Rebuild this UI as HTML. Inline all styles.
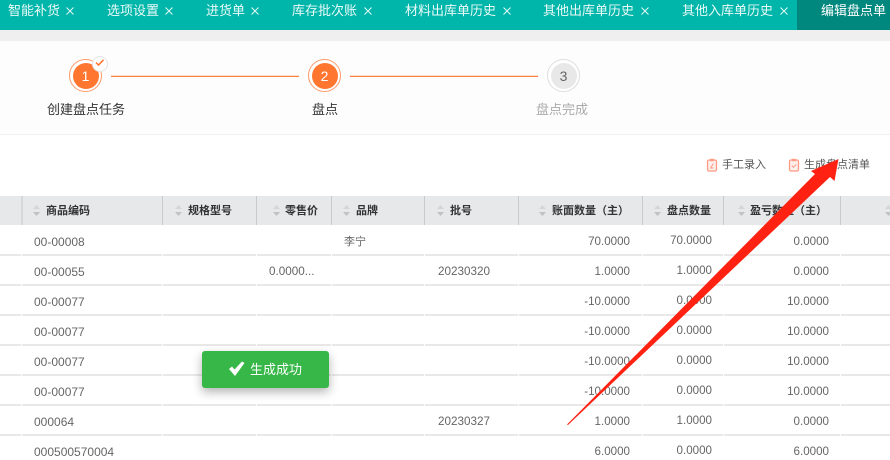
<!DOCTYPE html>
<html lang="zh">
<head>
<meta charset="utf-8">
<title>编辑盘点单</title>
<style>
html,body{margin:0;padding:0}
body{width:890px;height:450px;overflow:hidden;position:relative;background:#fff;font-family:"Liberation Sans","Noto Sans CJK SC",sans-serif;font-size:12px;color:#666}
.a{position:absolute;white-space:nowrap}
#tabs{left:0;top:0;width:890px;height:30px;background:#00b5a9;color:#eafaf8;font-size:13px;line-height:22px}
#tabs .a{top:0}
#tabs svg{position:absolute;top:7px}
#act{left:797px;top:0;width:93px;height:30px;background:#00877e}
#gap{left:0;top:30px;width:890px;height:11px;background:#efefef}
#steps{left:0;top:41px;width:890px;height:93px;background:#fdfdfd}
#stepline{left:0;top:134px;width:890px;height:1px;background:#f1f1f1}
.ring{width:31px;height:31px;border:1px solid #ff9a68;border-radius:50%;background:#fff}
.dot{width:26px;height:26px;border-radius:50%;background:#ff7630;color:#fff;text-align:center;line-height:26px;font-size:14px}
.ln{height:1px;background:#ff8040;top:76px;box-shadow:0 -1px 0 rgba(255,128,64,.25)}
.lbl{font-size:12px;top:101px;color:#333;line-height:18px}
.th{top:196px;height:29px;background:#e6e8ea}
.sep{top:196px;width:1px;height:29px;background:#c8cacc}
.h{top:196px;height:29px;line-height:30px;font-size:11px;font-weight:700;color:#333}
.s{top:204px;width:6px;height:13px}
.rl{left:0;width:890px;height:2px;background:#e8e8e8}
.gapv{top:225px;width:1px;height:225px;background:#fff}
.c{line-height:16px;color:#666}
.r{text-align:right;width:80px;font-size:11.600px}
.d{font-size:11.700px}
</style>
</head>
<body>
<div class="a" id="tabs">
  <div class="a" style="left:8px">智能补货</div>
  <div class="a" style="left:107px">选项设置</div>
  <div class="a" style="left:206px">进货单</div>
  <div class="a" style="left:292px">库存批次账</div>
  <div class="a" style="left:405px">材料出库单历史</div>
  <div class="a" style="left:543px">其他出库单历史</div>
  <div class="a" style="left:682px">其他入库单历史</div>
  <svg style="left:66px" width="8" height="8"><path d="M.5.5l7 7M7.5.5l-7 7" stroke="#e4f8f6"/></svg>
  <svg style="left:165px" width="8" height="8"><path d="M.5.5l7 7M7.5.5l-7 7" stroke="#e4f8f6"/></svg>
  <svg style="left:251px" width="8" height="8"><path d="M.5.5l7 7M7.5.5l-7 7" stroke="#e4f8f6"/></svg>
  <svg style="left:364px" width="8" height="8"><path d="M.5.5l7 7M7.5.5l-7 7" stroke="#e4f8f6"/></svg>
  <svg style="left:503px" width="8" height="8"><path d="M.5.5l7 7M7.5.5l-7 7" stroke="#e4f8f6"/></svg>
  <svg style="left:641px" width="8" height="8"><path d="M.5.5l7 7M7.5.5l-7 7" stroke="#e4f8f6"/></svg>
  <svg style="left:780px" width="8" height="8"><path d="M.5.5l7 7M7.5.5l-7 7" stroke="#e4f8f6"/></svg>
  <div class="a" id="act"></div>
  <div class="a" style="left:821px;color:#fff">编辑盘点单</div>
</div>
<div class="a" id="gap"></div>
<div class="a" id="steps"></div>
<div class="a" id="stepline"></div>

<div class="a ring" style="left:69px;top:59px"></div>
<div class="a dot" style="left:72.500px;top:62.500px">1</div>
<div class="a" style="left:92px;top:56px;width:14px;height:14px;border-radius:50%;background:#fff;border:1px solid #e4e4e4"></div>
<svg class="a" style="left:95px;top:58px" width="10" height="9"><path d="M1 4.5l2.5 2.5L8.500 1.800" fill="none" stroke="#ff7630" stroke-width="1.500"/></svg>
<div class="a ln" style="left:111px;width:188px"></div>
<div class="a ring" style="left:308px;top:59px"></div>
<div class="a dot" style="left:311.500px;top:62.500px">2</div>
<div class="a ln" style="left:350px;width:188px"></div>
<div class="a ring" style="left:547px;top:59px;border-color:#ddd"></div>
<div class="a dot" style="left:550.500px;top:62.500px;background:#e8e8e8;color:#666">3</div>
<div class="a lbl" style="left:47px;font-size:13px">创建盘点任务</div>
<div class="a lbl" style="left:312px;font-size:13px">盘点</div>
<div class="a lbl" style="left:536px;font-size:13px;color:#aaa">盘点完成</div>

<svg class="a" style="left:706px;top:158px" width="12" height="14" viewBox="0 0 12 14"><rect x="1.500" y="2" width="9" height="11" rx="1.500" fill="#fff0ec" stroke="#ff9a85" stroke-width="1.300"/><rect x="4" y=".8" width="4" height="2.400" fill="#ff9a85"/><path d="M7.500 5.500L4.500 10h3" fill="none" stroke="#ff9a85"/></svg>
<div class="a" style="left:722px;top:157px;line-height:16px;color:#555;font-size:11px">手工录入</div>
<svg class="a" style="left:788px;top:158px" width="12" height="14" viewBox="0 0 12 14"><rect x="1.500" y="2" width="9" height="11" rx="1.500" fill="#fff0ec" stroke="#ff9a85" stroke-width="1.300"/><rect x="4" y=".8" width="4" height="2.400" fill="#ff9a85"/><path d="M3.800 7.500l1.700 1.800 2.800-3" fill="none" stroke="#ff9a85"/></svg>
<div class="a" style="left:804px;top:157px;line-height:16px;color:#555;font-size:11px">生成盘点清单</div>

<div class="a th" style="left:0;width:890px"></div>
<div class="a sep" style="left:21px;width:2px;background:#d6d8da"></div>
<div class="a sep" style="left:162px"></div>
<div class="a sep" style="left:256px"></div>
<div class="a sep" style="left:331px"></div>
<div class="a sep" style="left:424px"></div>
<div class="a sep" style="left:518px"></div>
<div class="a sep" style="left:642px"></div>
<div class="a sep" style="left:723px"></div>
<div class="a sep" style="left:840px"></div>

<svg width="0" height="0" style="position:absolute"><defs><g id="sort"><path d="M3.500 0L7 4H0z" fill="#d3d5d7"/><path d="M0 7h7L3.500 11z" fill="#bfc1c3"/></g></defs></svg>
<svg class="a s" style="left:33px;top:205px;width:7px;height:12px"><use href="#sort"/></svg>
<svg class="a s" style="left:175px;top:205px;width:7px;height:12px"><use href="#sort"/></svg>
<svg class="a s" style="left:273px;top:205px;width:7px;height:12px"><use href="#sort"/></svg>
<svg class="a s" style="left:343px;top:205px;width:7px;height:12px"><use href="#sort"/></svg>
<svg class="a s" style="left:437px;top:205px;width:7px;height:12px"><use href="#sort"/></svg>
<svg class="a s" style="left:539px;top:205px;width:7px;height:12px"><use href="#sort"/></svg>
<svg class="a s" style="left:654px;top:205px;width:7px;height:12px"><use href="#sort"/></svg>
<svg class="a s" style="left:738px;top:205px;width:7px;height:12px"><use href="#sort"/></svg>
<svg class="a s" style="left:885px;top:205px;width:7px;height:12px"><use href="#sort"/></svg>

<div class="a h" style="left:46px">商品编码</div>
<div class="a h" style="left:188px">规格型号</div>
<div class="a h" style="left:285px">零售价</div>
<div class="a h" style="left:356px">品牌</div>
<div class="a h" style="left:450px">批号</div>
<div class="a h" style="left:552px">账面数量（主）</div>
<div class="a h" style="left:667px">盘点数量</div>
<div class="a h" style="left:750px">盈亏数量（主）</div>

<div class="a rl" style="top:254px"></div>
<div class="a rl" style="top:284px"></div>
<div class="a rl" style="top:314px"></div>
<div class="a rl" style="top:344px"></div>
<div class="a rl" style="top:374px"></div>
<div class="a rl" style="top:404px"></div>
<div class="a rl" style="top:434px"></div>
<div class="a gapv" style="left:21px"></div>
<div class="a gapv" style="left:162px"></div>
<div class="a gapv" style="left:256px"></div>
<div class="a gapv" style="left:331px"></div>
<div class="a gapv" style="left:424px"></div>
<div class="a gapv" style="left:518px"></div>
<div class="a gapv" style="left:642px"></div>
<div class="a gapv" style="left:723px"></div>
<div class="a gapv" style="left:840px"></div>

<div class="a c" style="left:34px;top:234px">00-00008</div>
<div class="a c" style="left:34px;top:264px">00-00055</div>
<div class="a c" style="left:34px;top:294px">00-00077</div>
<div class="a c" style="left:34px;top:324px">00-00077</div>
<div class="a c" style="left:34px;top:354px">00-00077</div>
<div class="a c" style="left:34px;top:384px">00-00077</div>
<div class="a c" style="left:34px;top:414px">000064</div>
<div class="a c" style="left:34px;top:444px">000500570004</div>
<div class="a c d" style="left:269px;top:264px">0.0000...</div>
<div class="a c" style="left:344px;top:234px;font-size:11px">李宁</div>
<div class="a c d" style="left:438px;top:264px">20230320</div>
<div class="a c d" style="left:438px;top:414px">20230327</div>

<div class="a c r" style="left:550px;top:234px">70.0000</div>
<div class="a c r" style="left:550px;top:264px">1.0000</div>
<div class="a c r" style="left:550px;top:294px">-10.0000</div>
<div class="a c r" style="left:550px;top:324px">-10.0000</div>
<div class="a c r" style="left:550px;top:354px">-10.0000</div>
<div class="a c r" style="left:550px;top:384px">-10.0000</div>
<div class="a c r" style="left:550px;top:414px">1.0000</div>
<div class="a c r" style="left:550px;top:444px">6.0000</div>

<div class="a c r" style="left:632px;top:233px">70.0000</div>
<div class="a c r" style="left:632px;top:263px">1.0000</div>
<div class="a c r" style="left:632px;top:293px">0.0000</div>
<div class="a c r" style="left:632px;top:323px">0.0000</div>
<div class="a c r" style="left:632px;top:353px">0.0000</div>
<div class="a c r" style="left:632px;top:383px">0.0000</div>
<div class="a c r" style="left:632px;top:413px">1.0000</div>
<div class="a c r" style="left:632px;top:443px">0.0000</div>

<div class="a c r" style="left:749px;top:234px">0.0000</div>
<div class="a c r" style="left:749px;top:264px">0.0000</div>
<div class="a c r" style="left:749px;top:294px">10.0000</div>
<div class="a c r" style="left:749px;top:324px">10.0000</div>
<div class="a c r" style="left:749px;top:354px">10.0000</div>
<div class="a c r" style="left:749px;top:384px">10.0000</div>
<div class="a c r" style="left:749px;top:414px">0.0000</div>
<div class="a c r" style="left:749px;top:444px">6.0000</div>

<div class="a" style="left:202px;top:351px;width:127px;height:37px;background:#37b748;border-radius:3px;box-shadow:0 4px 10px rgba(0,0,0,.3)"></div>
<svg class="a" style="left:228px;top:361px" width="17" height="16"><path d="M1 8l3-2.500 2.500 3L14 .500 16.500 2 7 15z" fill="#fff"/></svg>
<div class="a" style="left:250px;top:361px;color:#fff;font-size:13px;line-height:18px">生成成功</div>

<svg class="a" style="left:0;top:0" width="890" height="450"><path d="M567 424.500L815 174 811 171 838.500 159 834.500 181 830 177 568 425z" fill="#ff2212"/></svg>
</body>
</html>
